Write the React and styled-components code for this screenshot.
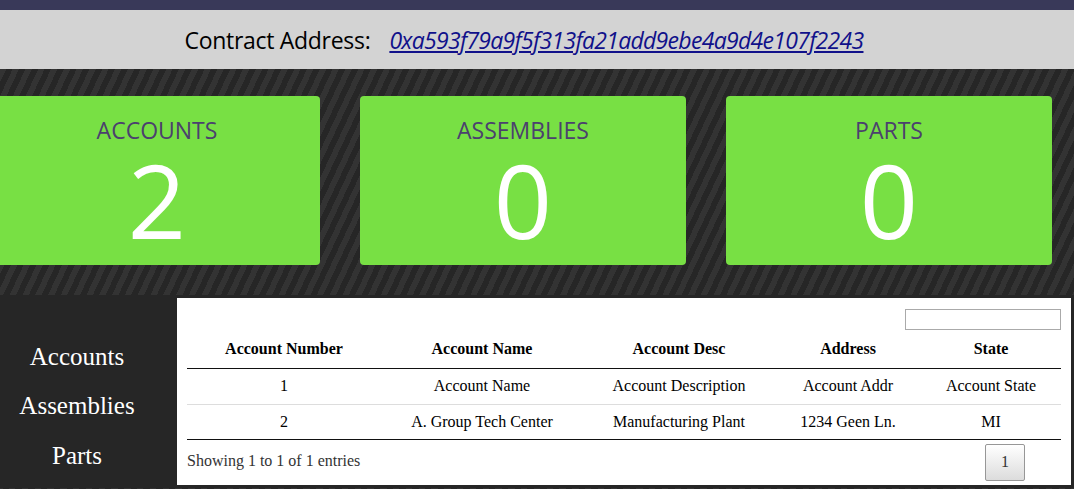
import styled, { createGlobalStyle } from 'styled-components'

const GlobalStyle = createGlobalStyle`
  html, body {
    margin: 0;
    padding: 0;
  }

  body {
    min-height: 100vh;
    overflow: hidden;
    background: repeating-linear-gradient(
      115deg,
      #262626 0 5.8px,
      #333333 5.8px 11.6px
    );
    font-family: "Liberation Serif", "Times New Roman", serif;
  }
`

const TopBar = styled.div`
  height: 10px;
  background: #393959;
`

const Header = styled.header`
  display: flex;
  height: 59px;
  align-items: center;
  justify-content: center;
  padding-right: 26px;
  background: #d3d3d3;
  color: #000000;
  font-family: "Open Sans", "Noto Sans", sans-serif;
  font-size: 23px;
`

const Label = styled.span`
  letter-spacing: -0.3px;
`

const AddressLink = styled.a`
  margin-left: 19px;
  color: #10108a;
  font-style: italic;
  letter-spacing: -0.7px;
  text-decoration: underline;
`

const CardRow = styled.section`
  display: flex;
  gap: 40px;
  margin-left: -6px;
  padding: 27px 0 30px;
`

const StatCard = styled.div`
  display: flex;
  width: 326px;
  height: 169px;
  box-sizing: border-box;
  flex-shrink: 0;
  flex-direction: column;
  align-items: center;
  padding-top: 18px;
  border-radius: 4px;
  background: #78e044;
  font-family: "Open Sans", "Noto Sans", sans-serif;
`

const CardTitle = styled.div`
  color: #4b416e;
  font-size: 23px;
`

const CardValue = styled.div`
  margin-top: 3px;
  color: #ffffff;
  font-size: 102px;
  line-height: 1;
`

const Lower = styled.section`
  display: flex;
  background: #262626;
`

const Sidebar = styled.nav`
  display: flex;
  width: 154px;
  flex-shrink: 0;
  flex-direction: column;
  align-items: center;
  gap: 20.8px;
  padding-top: 47.6px;
`

const NavLink = styled.a`
  color: #ffffff;
  font-size: 25px;
  line-height: 28.75px;
  text-decoration: none;
`

const Panel = styled.div`
  flex: 1;
  min-width: 0;
  margin: 3px 3px 3px 23px;
  padding: 10px 10px 4px;
  background: #ffffff;
  font-size: 16px;
  color: #000000;
`

const FilterRow = styled.div`
  display: flex;
  justify-content: flex-end;
  padding-top: 1px;
`

const SearchInput = styled.input`
  width: 156px;
  height: 21px;
  box-sizing: border-box;
  margin: 0;
  border: 1px solid #aaaaaa;
  padding: 2px 4px;
`

const Table = styled.table`
  width: 100%;
  border-collapse: collapse;
  border-bottom: 1px solid #111111;
  table-layout: fixed;
`

const Th = styled.th`
  width: ${(p) => p.$w}px;
  box-sizing: border-box;
  padding: 10px 4px;
  border-bottom: 1px solid #111111;
  font-weight: bold;
  line-height: 18.4px;
  text-align: center;
`

const Td = styled.td`
  padding: 8px 4px;
  line-height: 18.4px;
  text-align: center;
  white-space: nowrap;
`

const Tr = styled.tr`
  & + & td {
    border-top: 1px solid #dddddd;
  }
`

const Footer = styled.div`
  display: flex;
  align-items: flex-start;
  justify-content: space-between;
`

const Info = styled.div`
  padding-top: 12px;
  color: #333333;
  line-height: 18.4px;
`

const PageButton = styled.button`
  margin: 4px 36px 0 0;
  border: 1px solid #979797;
  border-radius: 2px;
  padding: 8px 15px;
  background: linear-gradient(to bottom, #ffffff 0%, #dcdcdc 100%);
  color: #333333;
  font-family: "Liberation Serif", "Times New Roman", serif;
  font-size: 16px;
  line-height: 18.4px;
`

const columns = [
  ['Account Number', 194],
  ['Account Name', 202],
  ['Account Desc', 192],
  ['Address', 146],
  ['State', 140],
]

const rows = [
  ['1', 'Account Name', 'Account Description', 'Account Addr', 'Account State'],
  ['2', 'A. Group Tech Center', 'Manufacturing Plant', '1234 Geen Ln.', 'MI'],
]

const stats = [
  ['ACCOUNTS', 2],
  ['ASSEMBLIES', 0],
  ['PARTS', 0],
]

export default function App() {
  return (
    <>
      <GlobalStyle />
      <TopBar />
      <Header>
        <Label>Contract Address:</Label>
        <AddressLink href="#">0xa593f79a9f5f313fa21add9ebe4a9d4e107f2243</AddressLink>
      </Header>

      <CardRow>
        {stats.map(([title, value]) => (
          <StatCard key={title}>
            <CardTitle>{title}</CardTitle>
            <CardValue>{value}</CardValue>
          </StatCard>
        ))}
      </CardRow>

      <Lower>
        <Sidebar>
          <NavLink href="#">Accounts</NavLink>
          <NavLink href="#">Assemblies</NavLink>
          <NavLink href="#">Parts</NavLink>
        </Sidebar>

        <Panel>
          <FilterRow>
            <SearchInput type="search" aria-label="Search" />
          </FilterRow>
          <Table>
            <thead>
              <tr>
                {columns.map(([label, w]) => (
                  <Th key={label} $w={w}>{label}</Th>
                ))}
              </tr>
            </thead>
            <tbody>
              {rows.map((row) => (
                <Tr key={row[0]}>
                  {row.map((cell, i) => (
                    <Td key={i}>{cell}</Td>
                  ))}
                </Tr>
              ))}
            </tbody>
          </Table>
          <Footer>
            <Info>Showing 1 to 1 of 1 entries</Info>
            <PageButton type="button">1</PageButton>
          </Footer>
        </Panel>
      </Lower>
    </>
  )
}
